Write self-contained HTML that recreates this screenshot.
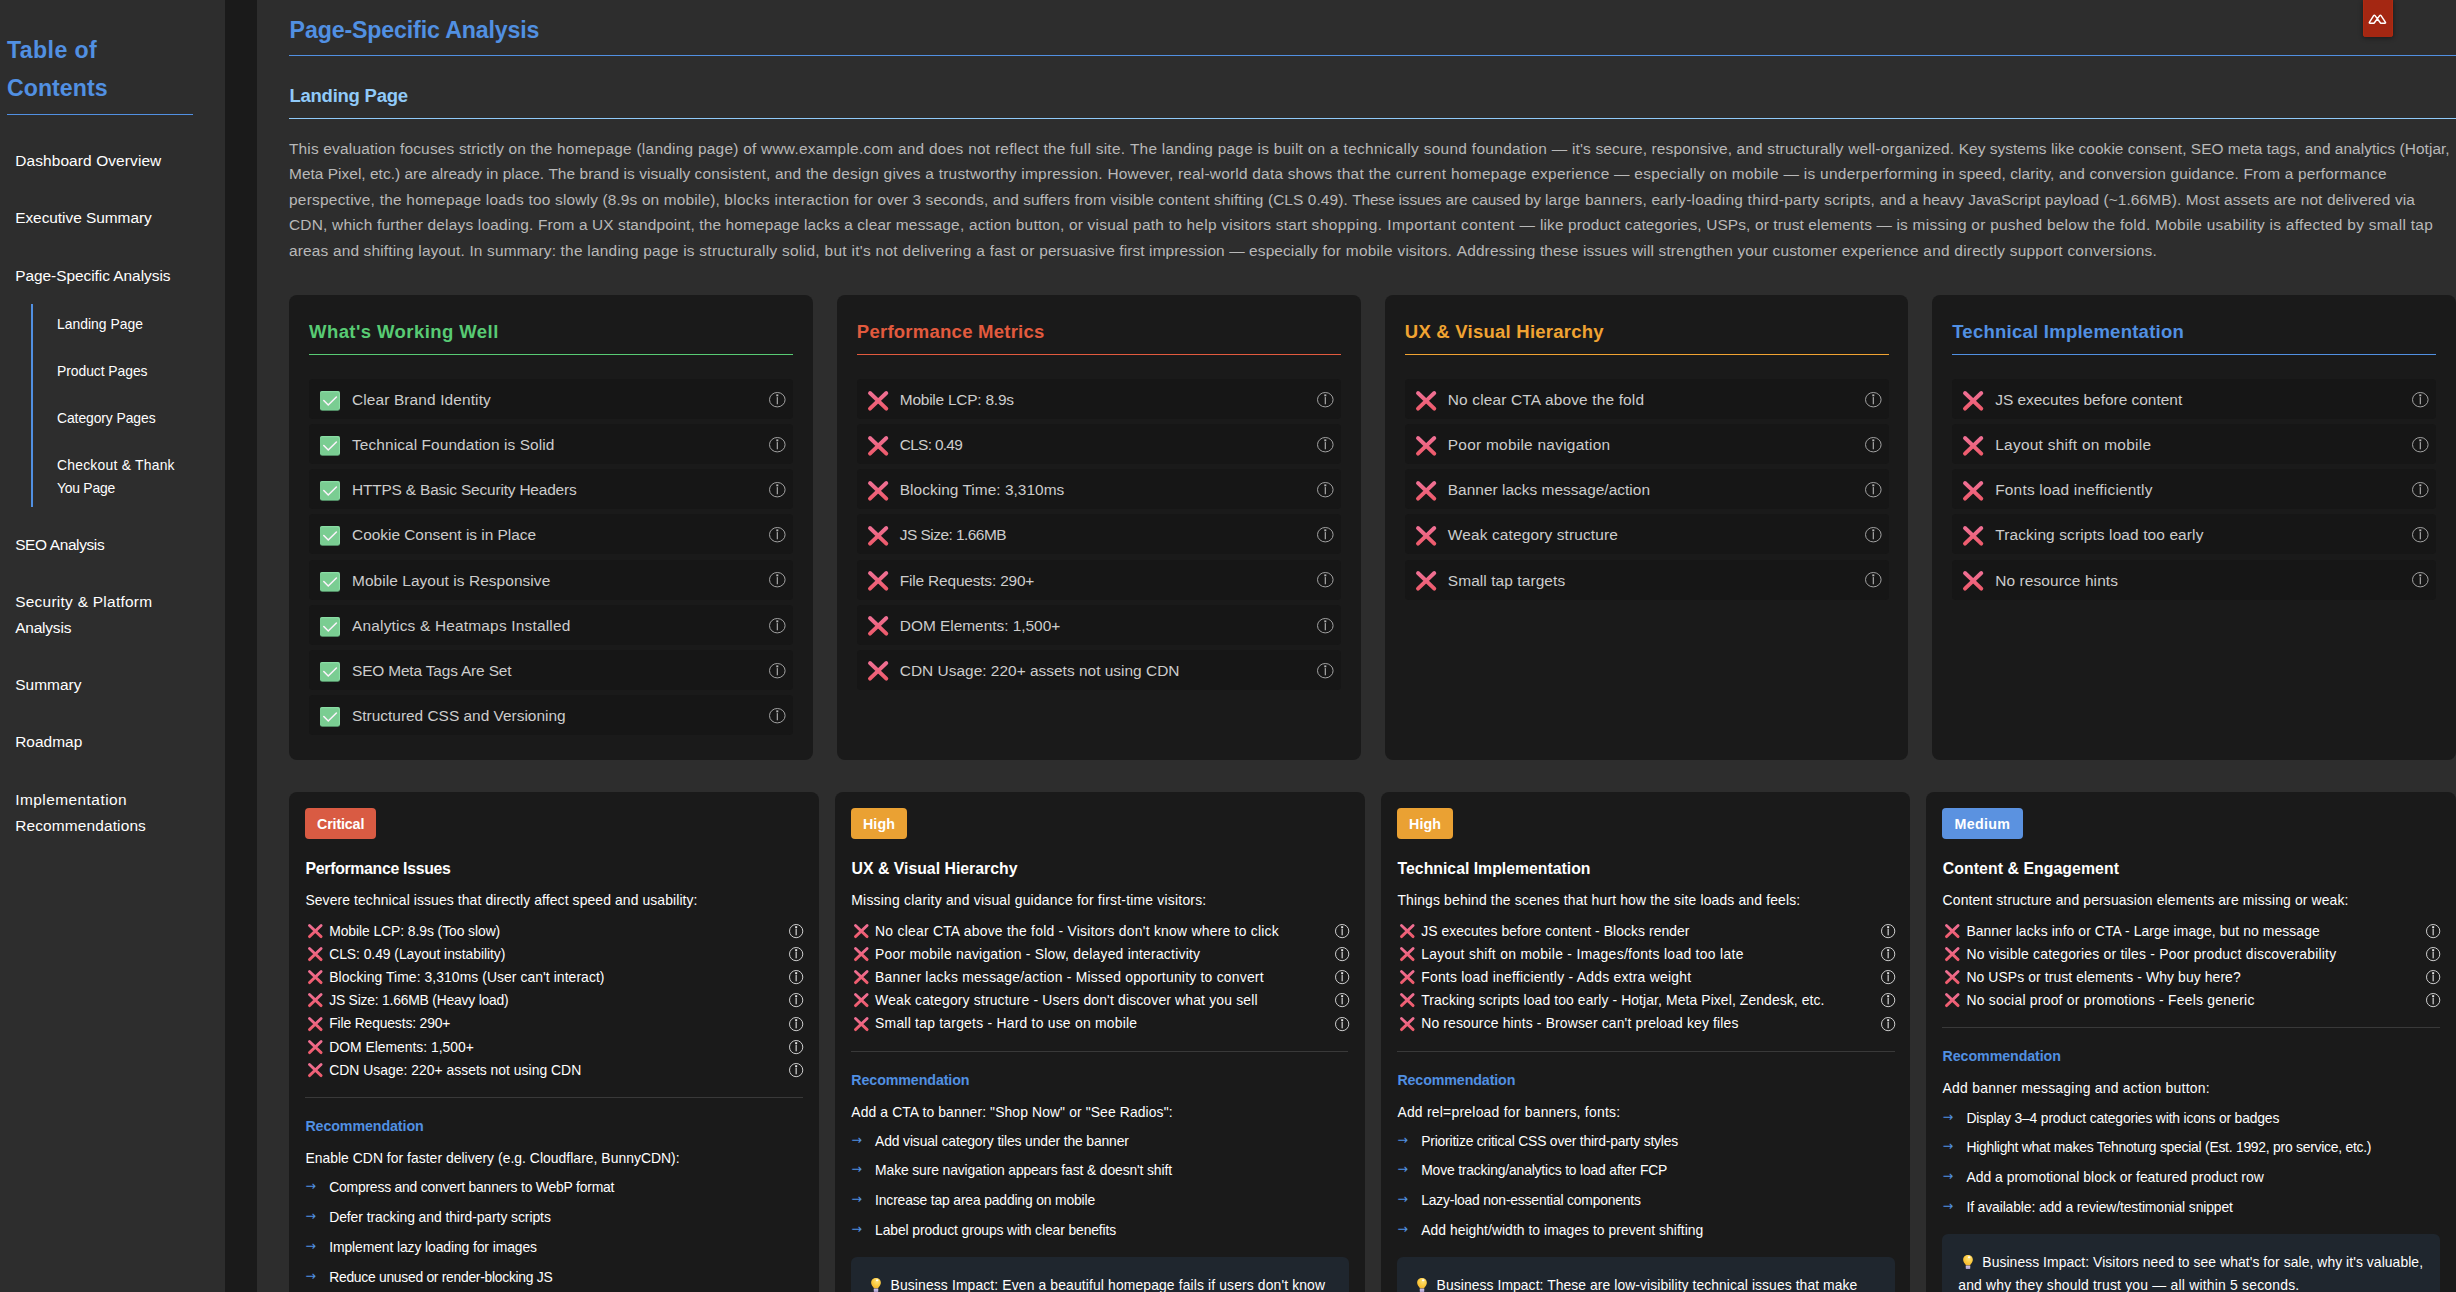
<!DOCTYPE html><html lang="en"><head><meta charset="utf-8"><title>Page-Specific Analysis</title><style>

html,body{margin:0;padding:0;}
html{width:2456px;height:1292px;overflow:hidden;background:#1a1a1a;}
body{width:2456px;height:1292px;overflow:hidden;background:#1a1a1a;font-family:"Liberation Sans", sans-serif;position:relative;}
.page{position:absolute;left:0;top:0;width:2456px;height:1292px;overflow:hidden;background:#1a1a1a;}
.b{position:absolute;display:block;}
svg.b{overflow:visible;}
.t{position:absolute;white-space:pre;display:block;margin:0;padding:0;font-weight:400;}
h1,h2,h3,h4,h5,p,ul,li,nav,main,section,header,a{margin:0;padding:0;list-style:none;font-size:inherit;font-weight:inherit;}

</style></head><body>
<svg width="0" height="0" style="position:absolute"><defs><linearGradient id="gx" x1="0" y1="0" x2="0" y2="1"><stop offset="0" stop-color="#f06f93"/><stop offset="1" stop-color="#ee5b6c"/></linearGradient><radialGradient id="gb" cx="0.6" cy="0.3" r="0.8"><stop offset="0" stop-color="#ffe27a"/><stop offset="0.55" stop-color="#fbc93d"/><stop offset="1" stop-color="#f0ad2a"/></radialGradient></defs></svg>
<div class="page">
<nav class="sidebar">
<div class="b" style="left:0.00px;top:0.00px;width:225.00px;height:1292.00px;background:#2d2d2d;border-radius:0px;"></div>
<h2 class="toc-title">
<span class="t" style="left:7.00px;top:30.78px;font-size:23.16px;line-height:38.4px;color:#5190e2;font-weight:700;letter-spacing:0.380px;">Table of</span>
<span class="t" style="left:7.00px;top:69.18px;font-size:23.16px;line-height:38.4px;color:#5190e2;font-weight:700;letter-spacing:0.032px;">Contents</span>
</h2>
<div class="b" style="left:7.00px;top:114.00px;width:186.00px;height:1.00px;background:#5190e2;border-radius:0px;"></div>
<ul class="toc">
<li>
<a class="t" style="left:15.20px;top:147.85px;font-size:15.44px;line-height:25.6px;color:#ffffff;letter-spacing:0.114px;">Dashboard Overview</a>
</li>
<li>
<a class="t" style="left:15.20px;top:205.15px;font-size:15.44px;line-height:25.6px;color:#ffffff;letter-spacing:-0.045px;">Executive Summary</a>
</li>
<li>
<a class="t" style="left:15.20px;top:262.55px;font-size:15.44px;line-height:25.6px;color:#ffffff;letter-spacing:-0.040px;">Page-Specific Analysis</a>
<ul class="toc-sub">
<div class="b" style="left:31.00px;top:304.00px;width:2.00px;height:203.00px;background:#5190e2;border-radius:0px;"></div>
<li>
<a class="t" style="left:57.00px;top:312.66px;font-size:13.9px;line-height:23.04px;color:#ffffff;letter-spacing:0.013px;">Landing Page</a>
</li>
<li>
<a class="t" style="left:57.00px;top:359.66px;font-size:13.9px;line-height:23.04px;color:#ffffff;letter-spacing:-0.048px;">Product Pages</a>
</li>
<li>
<a class="t" style="left:57.00px;top:406.66px;font-size:13.9px;line-height:23.04px;color:#ffffff;letter-spacing:-0.079px;">Category Pages</a>
</li>
<li>
<a class="t" style="left:57.00px;top:453.66px;font-size:13.9px;line-height:23.04px;color:#ffffff;letter-spacing:0.236px;">Checkout &amp; Thank</a>
<a class="t" style="left:57.00px;top:476.66px;font-size:13.9px;line-height:23.04px;color:#ffffff;letter-spacing:-0.231px;">You Page</a>
</li>
</ul>
</li>
<li>
<a class="t" style="left:15.20px;top:531.55px;font-size:15.44px;line-height:25.6px;color:#ffffff;letter-spacing:-0.369px;">SEO Analysis</a>
</li>
<li>
<a class="t" style="left:15.20px;top:588.95px;font-size:15.44px;line-height:25.6px;color:#ffffff;letter-spacing:0.267px;">Security &amp; Platform</a>
<a class="t" style="left:15.20px;top:614.55px;font-size:15.44px;line-height:25.6px;color:#ffffff;letter-spacing:-0.186px;">Analysis</a>
</li>
<li>
<a class="t" style="left:15.20px;top:672.15px;font-size:15.44px;line-height:25.6px;color:#ffffff;letter-spacing:0.036px;">Summary</a>
</li>
<li>
<a class="t" style="left:15.20px;top:729.45px;font-size:15.44px;line-height:25.6px;color:#ffffff;letter-spacing:0.023px;">Roadmap</a>
</li>
<li>
<a class="t" style="left:15.20px;top:787.05px;font-size:15.44px;line-height:25.6px;color:#ffffff;letter-spacing:0.454px;">Implementation</a>
<a class="t" style="left:15.20px;top:812.65px;font-size:15.44px;line-height:25.6px;color:#ffffff;letter-spacing:0.139px;">Recommendations</a>
</li>
</ul>
</nav>
<main class="content">
<div class="b" style="left:257.00px;top:0.00px;width:2199.00px;height:1292.00px;background:#2d2d2d;border-radius:0px;"></div>
<h2 class="t" style="left:289.60px;top:10.78px;font-size:23.16px;line-height:38.4px;color:#5190e2;font-weight:700;letter-spacing:-0.136px;">Page-Specific Analysis</h2>
<div class="b" style="left:289.00px;top:55.00px;width:2167.00px;height:1.00px;background:#5190e2;border-radius:0px;"></div>
<h3 class="t" style="left:289.40px;top:81.02px;font-size:18.53px;line-height:30.72px;color:#90caf9;font-weight:700;letter-spacing:-0.242px;">Landing Page</h3>
<div class="b" style="left:289.00px;top:118.00px;width:2167.00px;height:1.00px;background:#90caf9;border-radius:0px;"></div>
<p class="intro">
<span class="t" style="left:289.00px;top:135.85px;font-size:15.44px;line-height:25.6px;color:#b9b9b9;letter-spacing:0.179px;">This evaluation focuses strictly on the </span>
<span class="t" style="left:557.00px;top:135.85px;font-size:15.44px;line-height:25.6px;color:#b9b9b9;letter-spacing:0.248px;">homepage (landing page) </span>
<span class="t" style="left:743.20px;top:135.85px;font-size:15.44px;line-height:25.6px;color:#b9b9b9;letter-spacing:0.240px;">of www.example.com </span>
<span class="t" style="left:897.90px;top:135.85px;font-size:15.44px;line-height:25.6px;color:#b9b9b9;letter-spacing:0.270px;">and does not reflect the full site. </span>
<span class="t" style="left:1129.90px;top:135.85px;font-size:15.44px;line-height:25.6px;color:#b9b9b9;letter-spacing:0.236px;">The landing page is built </span>
<span class="t" style="left:1307.70px;top:135.85px;font-size:15.44px;line-height:25.6px;color:#b9b9b9;letter-spacing:0.309px;">on a technically sound foundation — </span>
<span class="t" style="left:1572.00px;top:135.85px;font-size:15.44px;line-height:25.6px;color:#b9b9b9;letter-spacing:0.152px;">it's secure, responsive, and structurally well-organized. </span>
<span class="t" style="left:1958.70px;top:135.85px;font-size:15.44px;line-height:25.6px;color:#b9b9b9;letter-spacing:0.040px;">Key systems like cookie consent, SEO meta tags, and analytics (Hotjar,</span>
<span class="t" style="left:289.00px;top:161.35px;font-size:15.44px;line-height:25.6px;color:#b9b9b9;letter-spacing:0.028px;">Meta Pixel, etc.) are already in place. </span>
<span class="t" style="left:548.40px;top:161.35px;font-size:15.44px;line-height:25.6px;color:#b9b9b9;letter-spacing:0.054px;">The brand is visually </span>
<span class="t" style="left:694.60px;top:161.35px;font-size:15.44px;line-height:25.6px;color:#b9b9b9;letter-spacing:0.197px;">consistent, and the design </span>
<span class="t" style="left:883.60px;top:161.35px;font-size:15.44px;line-height:25.6px;color:#b9b9b9;letter-spacing:0.237px;">gives a trustworthy impression. </span>
<span class="t" style="left:1107.40px;top:161.35px;font-size:15.44px;line-height:25.6px;color:#b9b9b9;letter-spacing:0.210px;">However, real-world data shows </span>
<span class="t" style="left:1337.00px;top:161.35px;font-size:15.44px;line-height:25.6px;color:#b9b9b9;letter-spacing:0.339px;">that the current homepage </span>
<span class="t" style="left:1531.20px;top:161.35px;font-size:15.44px;line-height:25.6px;color:#b9b9b9;letter-spacing:0.280px;">experience — especially on mobile — is underperforming </span>
<span class="t" style="left:1942.20px;top:161.35px;font-size:15.44px;line-height:25.6px;color:#b9b9b9;letter-spacing:0.107px;">in speed, clarity, and </span>
<span class="t" style="left:2089.40px;top:161.35px;font-size:15.44px;line-height:25.6px;color:#b9b9b9;letter-spacing:0.186px;">conversion guidance. From a performance</span>
<span class="t" style="left:289.00px;top:186.85px;font-size:15.44px;line-height:25.6px;color:#b9b9b9;letter-spacing:0.240px;">perspective, the homepage loads too </span>
<span class="t" style="left:555.10px;top:186.85px;font-size:15.44px;line-height:25.6px;color:#b9b9b9;letter-spacing:0.144px;">slowly (8.9s on mobile), </span>
<span class="t" style="left:724.30px;top:186.85px;font-size:15.44px;line-height:25.6px;color:#b9b9b9;letter-spacing:0.318px;">blocks interaction for </span>
<span class="t" style="left:877.50px;top:186.85px;font-size:15.44px;line-height:25.6px;color:#b9b9b9;letter-spacing:0.123px;">over 3 seconds, and suffers from </span>
<span class="t" style="left:1110.40px;top:186.85px;font-size:15.44px;line-height:25.6px;color:#b9b9b9;letter-spacing:0.088px;">visible content shifting (CLS 0.49). </span>
<span class="t" style="left:1352.20px;top:186.85px;font-size:15.44px;line-height:25.6px;color:#b9b9b9;letter-spacing:-0.141px;">These issues are caused by </span>
<span class="t" style="left:1544.90px;top:186.85px;font-size:15.44px;line-height:25.6px;color:#b9b9b9;letter-spacing:0.243px;">large banners, early-loading third-party scripts, </span>
<span class="t" style="left:1879.70px;top:186.85px;font-size:15.44px;line-height:25.6px;color:#b9b9b9;letter-spacing:0.018px;">and a heavy JavaScript payload </span>
<span class="t" style="left:2103.40px;top:186.85px;font-size:15.44px;line-height:25.6px;color:#b9b9b9;letter-spacing:0.110px;">(~1.66MB). Most assets are not delivered via</span>
<span class="t" style="left:289.00px;top:212.35px;font-size:15.44px;line-height:25.6px;color:#b9b9b9;letter-spacing:0.201px;">CDN, which further delays loading. </span>
<span class="t" style="left:538.00px;top:212.35px;font-size:15.44px;line-height:25.6px;color:#b9b9b9;letter-spacing:0.117px;">From a UX standpoint, </span>
<span class="t" style="left:699.30px;top:212.35px;font-size:15.44px;line-height:25.6px;color:#b9b9b9;letter-spacing:0.126px;">the homepage lacks a clear </span>
<span class="t" style="left:895.80px;top:212.35px;font-size:15.44px;line-height:25.6px;color:#b9b9b9;letter-spacing:0.207px;">message, action button, or </span>
<span class="t" style="left:1087.60px;top:212.35px;font-size:15.44px;line-height:25.6px;color:#b9b9b9;letter-spacing:0.246px;">visual path to help visitors start </span>
<span class="t" style="left:1311.60px;top:212.35px;font-size:15.44px;line-height:25.6px;color:#b9b9b9;letter-spacing:0.433px;">shopping. Important content — </span>
<span class="t" style="left:1540.00px;top:212.35px;font-size:15.44px;line-height:25.6px;color:#b9b9b9;letter-spacing:0.124px;">like product categories, USPs, or trust elements — </span>
<span class="t" style="left:1896.40px;top:212.35px;font-size:15.44px;line-height:25.6px;color:#b9b9b9;letter-spacing:0.262px;">is missing or pushed below the </span>
<span class="t" style="left:2119.90px;top:212.35px;font-size:15.44px;line-height:25.6px;color:#b9b9b9;letter-spacing:0.278px;">fold. Mobile usability is affected by small tap</span>
<span class="t" style="left:289.00px;top:237.85px;font-size:15.44px;line-height:25.6px;color:#b9b9b9;letter-spacing:0.166px;">areas and shifting layout. In summary: </span>
<span class="t" style="left:560.60px;top:237.85px;font-size:15.44px;line-height:25.6px;color:#b9b9b9;letter-spacing:0.240px;">the landing page is </span>
<span class="t" style="left:699.30px;top:237.85px;font-size:15.44px;line-height:25.6px;color:#b9b9b9;letter-spacing:0.298px;">structurally solid, but it's </span>
<span class="t" style="left:875.60px;top:237.85px;font-size:15.44px;line-height:25.6px;color:#b9b9b9;letter-spacing:0.297px;">not delivering a fast or </span>
<span class="t" style="left:1039.20px;top:237.85px;font-size:15.44px;line-height:25.6px;color:#b9b9b9;letter-spacing:0.106px;">persuasive first impression — especially </span>
<span class="t" style="left:1322.40px;top:237.85px;font-size:15.44px;line-height:25.6px;color:#b9b9b9;letter-spacing:0.267px;">for mobile visitors. </span>
<span class="t" style="left:1456.70px;top:237.85px;font-size:15.44px;line-height:25.6px;color:#b9b9b9;letter-spacing:0.155px;">Addressing these issues will strengthen your customer experience </span>
<span class="t" style="left:1923.30px;top:237.85px;font-size:15.44px;line-height:25.6px;color:#b9b9b9;letter-spacing:0.243px;">and directly support conversions.</span>
</p>
<div class="ext-tab">
<div class="b" style="left:2363px;top:0;width:30px;height:37px;background:#a42712;border-radius:0 0 3px 3px;box-shadow:0 1px 5px rgba(0,0,0,.45), inset 1px 0 0 #b02a10, inset -1px 0 0 #b02a10"></div>
<svg class="b" style="left:2366.00px;top:12.00px" width="24" height="15" viewBox="0 0 24 15"><path d="M4.15 11.25 Q2.75 11.25 3.51 10.07 L7.65 3.66 Q8.30 2.65 9.02 3.61 L14.33 10.69 Q14.75 11.25 15.45 11.25 L18.70 11.25 Q20.10 11.25 19.33 10.08 L15.06 3.65 Q14.40 2.65 13.68 3.61 L8.37 10.69 Q7.95 11.25 7.25 11.25 Z" fill="none" stroke="#fff" stroke-width="1.5" stroke-linejoin="round"/></svg>
</div>
<div class="summary-grid">
<section class="summary-card">
<div class="b" style="left:289.00px;top:295.00px;width:524.20px;height:465.00px;background:#1a1a1a;border-radius:8px;"></div>
<h4 class="t" style="left:309.00px;top:317.12px;font-size:18.53px;line-height:30.72px;color:#58cb74;font-weight:700;letter-spacing:0.422px;">What's Working Well</h4>
<div class="b" style="left:309.00px;top:354.00px;width:484.00px;height:1.00px;background:#58cb74;border-radius:0px;"></div>
<ul>
<li>
<div class="b" style="left:309.00px;top:379.00px;width:484.00px;height:40.00px;background:#161616;border-radius:4px;"></div>
<svg class="b" style="left:320.15px;top:390.95px" width="20" height="19.8" viewBox="0 0 20 19.8"><rect x="0" y="0" width="20" height="19.8" rx="2.4" fill="#64b17e"/><rect x="0" y="0" width="20" height="18.7" rx="2.4" fill="#8adda4"/><rect x="0" y="1.3" width="18.9" height="17.4" rx="2" fill="#7acd92"/><path d="M3.8 9.5 L8.25 14.0 L16.4 5.95" fill="none" stroke="#fbf2fb" stroke-width="1.55" stroke-linecap="round" stroke-linejoin="miter"/></svg>
<span class="t" style="left:352.00px;top:386.95px;font-size:15.44px;line-height:25.6px;color:#cdcdcd;letter-spacing:0.123px;">Clear Brand Identity</span>
<svg class="b" style="left:767.70px;top:390.80px" width="18.6" height="17.4" viewBox="0 0 18.6 17.4"><ellipse cx="9.30" cy="8.70" rx="7.80" ry="7.20" fill="none" stroke="#a2a2a2" stroke-width="1"/><rect x="8.75" y="6.10" width="1.1" height="7.20" fill="#b4b4b4"/><rect x="8.30" y="3.40" width="2" height="1.9" fill="#b4b4b4"/></svg>
</li>
<li>
<div class="b" style="left:309.00px;top:424.14px;width:484.00px;height:40.00px;background:#161616;border-radius:4px;"></div>
<svg class="b" style="left:320.15px;top:436.09px" width="20" height="19.8" viewBox="0 0 20 19.8"><rect x="0" y="0" width="20" height="19.8" rx="2.4" fill="#64b17e"/><rect x="0" y="0" width="20" height="18.7" rx="2.4" fill="#8adda4"/><rect x="0" y="1.3" width="18.9" height="17.4" rx="2" fill="#7acd92"/><path d="M3.8 9.5 L8.25 14.0 L16.4 5.95" fill="none" stroke="#fbf2fb" stroke-width="1.55" stroke-linecap="round" stroke-linejoin="miter"/></svg>
<span class="t" style="left:352.00px;top:432.09px;font-size:15.44px;line-height:25.6px;color:#cdcdcd;letter-spacing:0.088px;">Technical Foundation is Solid</span>
<svg class="b" style="left:767.70px;top:435.94px" width="18.6" height="17.4" viewBox="0 0 18.6 17.4"><ellipse cx="9.30" cy="8.70" rx="7.80" ry="7.20" fill="none" stroke="#a2a2a2" stroke-width="1"/><rect x="8.75" y="6.10" width="1.1" height="7.20" fill="#b4b4b4"/><rect x="8.30" y="3.40" width="2" height="1.9" fill="#b4b4b4"/></svg>
</li>
<li>
<div class="b" style="left:309.00px;top:469.28px;width:484.00px;height:40.00px;background:#161616;border-radius:4px;"></div>
<svg class="b" style="left:320.15px;top:481.23px" width="20" height="19.8" viewBox="0 0 20 19.8"><rect x="0" y="0" width="20" height="19.8" rx="2.4" fill="#64b17e"/><rect x="0" y="0" width="20" height="18.7" rx="2.4" fill="#8adda4"/><rect x="0" y="1.3" width="18.9" height="17.4" rx="2" fill="#7acd92"/><path d="M3.8 9.5 L8.25 14.0 L16.4 5.95" fill="none" stroke="#fbf2fb" stroke-width="1.55" stroke-linecap="round" stroke-linejoin="miter"/></svg>
<span class="t" style="left:352.00px;top:477.23px;font-size:15.44px;line-height:25.6px;color:#cdcdcd;letter-spacing:-0.181px;">HTTPS &amp; Basic Security Headers</span>
<svg class="b" style="left:767.70px;top:481.08px" width="18.6" height="17.4" viewBox="0 0 18.6 17.4"><ellipse cx="9.30" cy="8.70" rx="7.80" ry="7.20" fill="none" stroke="#a2a2a2" stroke-width="1"/><rect x="8.75" y="6.10" width="1.1" height="7.20" fill="#b4b4b4"/><rect x="8.30" y="3.40" width="2" height="1.9" fill="#b4b4b4"/></svg>
</li>
<li>
<div class="b" style="left:309.00px;top:514.42px;width:484.00px;height:40.00px;background:#161616;border-radius:4px;"></div>
<svg class="b" style="left:320.15px;top:526.37px" width="20" height="19.8" viewBox="0 0 20 19.8"><rect x="0" y="0" width="20" height="19.8" rx="2.4" fill="#64b17e"/><rect x="0" y="0" width="20" height="18.7" rx="2.4" fill="#8adda4"/><rect x="0" y="1.3" width="18.9" height="17.4" rx="2" fill="#7acd92"/><path d="M3.8 9.5 L8.25 14.0 L16.4 5.95" fill="none" stroke="#fbf2fb" stroke-width="1.55" stroke-linecap="round" stroke-linejoin="miter"/></svg>
<span class="t" style="left:352.00px;top:522.37px;font-size:15.44px;line-height:25.6px;color:#cdcdcd;letter-spacing:-0.015px;">Cookie Consent is in Place</span>
<svg class="b" style="left:767.70px;top:526.22px" width="18.6" height="17.4" viewBox="0 0 18.6 17.4"><ellipse cx="9.30" cy="8.70" rx="7.80" ry="7.20" fill="none" stroke="#a2a2a2" stroke-width="1"/><rect x="8.75" y="6.10" width="1.1" height="7.20" fill="#b4b4b4"/><rect x="8.30" y="3.40" width="2" height="1.9" fill="#b4b4b4"/></svg>
</li>
<li>
<div class="b" style="left:309.00px;top:559.56px;width:484.00px;height:40.00px;background:#161616;border-radius:4px;"></div>
<svg class="b" style="left:320.15px;top:571.51px" width="20" height="19.8" viewBox="0 0 20 19.8"><rect x="0" y="0" width="20" height="19.8" rx="2.4" fill="#64b17e"/><rect x="0" y="0" width="20" height="18.7" rx="2.4" fill="#8adda4"/><rect x="0" y="1.3" width="18.9" height="17.4" rx="2" fill="#7acd92"/><path d="M3.8 9.5 L8.25 14.0 L16.4 5.95" fill="none" stroke="#fbf2fb" stroke-width="1.55" stroke-linecap="round" stroke-linejoin="miter"/></svg>
<span class="t" style="left:352.00px;top:567.51px;font-size:15.44px;line-height:25.6px;color:#cdcdcd;letter-spacing:0.066px;">Mobile Layout is Responsive</span>
<svg class="b" style="left:767.70px;top:571.36px" width="18.6" height="17.4" viewBox="0 0 18.6 17.4"><ellipse cx="9.30" cy="8.70" rx="7.80" ry="7.20" fill="none" stroke="#a2a2a2" stroke-width="1"/><rect x="8.75" y="6.10" width="1.1" height="7.20" fill="#b4b4b4"/><rect x="8.30" y="3.40" width="2" height="1.9" fill="#b4b4b4"/></svg>
</li>
<li>
<div class="b" style="left:309.00px;top:604.70px;width:484.00px;height:40.00px;background:#161616;border-radius:4px;"></div>
<svg class="b" style="left:320.15px;top:616.65px" width="20" height="19.8" viewBox="0 0 20 19.8"><rect x="0" y="0" width="20" height="19.8" rx="2.4" fill="#64b17e"/><rect x="0" y="0" width="20" height="18.7" rx="2.4" fill="#8adda4"/><rect x="0" y="1.3" width="18.9" height="17.4" rx="2" fill="#7acd92"/><path d="M3.8 9.5 L8.25 14.0 L16.4 5.95" fill="none" stroke="#fbf2fb" stroke-width="1.55" stroke-linecap="round" stroke-linejoin="miter"/></svg>
<span class="t" style="left:352.00px;top:612.65px;font-size:15.44px;line-height:25.6px;color:#cdcdcd;letter-spacing:0.190px;">Analytics &amp; Heatmaps Installed</span>
<svg class="b" style="left:767.70px;top:616.50px" width="18.6" height="17.4" viewBox="0 0 18.6 17.4"><ellipse cx="9.30" cy="8.70" rx="7.80" ry="7.20" fill="none" stroke="#a2a2a2" stroke-width="1"/><rect x="8.75" y="6.10" width="1.1" height="7.20" fill="#b4b4b4"/><rect x="8.30" y="3.40" width="2" height="1.9" fill="#b4b4b4"/></svg>
</li>
<li>
<div class="b" style="left:309.00px;top:649.84px;width:484.00px;height:40.00px;background:#161616;border-radius:4px;"></div>
<svg class="b" style="left:320.15px;top:661.79px" width="20" height="19.8" viewBox="0 0 20 19.8"><rect x="0" y="0" width="20" height="19.8" rx="2.4" fill="#64b17e"/><rect x="0" y="0" width="20" height="18.7" rx="2.4" fill="#8adda4"/><rect x="0" y="1.3" width="18.9" height="17.4" rx="2" fill="#7acd92"/><path d="M3.8 9.5 L8.25 14.0 L16.4 5.95" fill="none" stroke="#fbf2fb" stroke-width="1.55" stroke-linecap="round" stroke-linejoin="miter"/></svg>
<span class="t" style="left:352.00px;top:657.79px;font-size:15.44px;line-height:25.6px;color:#cdcdcd;letter-spacing:-0.164px;">SEO Meta Tags Are Set</span>
<svg class="b" style="left:767.70px;top:661.64px" width="18.6" height="17.4" viewBox="0 0 18.6 17.4"><ellipse cx="9.30" cy="8.70" rx="7.80" ry="7.20" fill="none" stroke="#a2a2a2" stroke-width="1"/><rect x="8.75" y="6.10" width="1.1" height="7.20" fill="#b4b4b4"/><rect x="8.30" y="3.40" width="2" height="1.9" fill="#b4b4b4"/></svg>
</li>
<li>
<div class="b" style="left:309.00px;top:694.98px;width:484.00px;height:40.00px;background:#161616;border-radius:4px;"></div>
<svg class="b" style="left:320.15px;top:706.93px" width="20" height="19.8" viewBox="0 0 20 19.8"><rect x="0" y="0" width="20" height="19.8" rx="2.4" fill="#64b17e"/><rect x="0" y="0" width="20" height="18.7" rx="2.4" fill="#8adda4"/><rect x="0" y="1.3" width="18.9" height="17.4" rx="2" fill="#7acd92"/><path d="M3.8 9.5 L8.25 14.0 L16.4 5.95" fill="none" stroke="#fbf2fb" stroke-width="1.55" stroke-linecap="round" stroke-linejoin="miter"/></svg>
<span class="t" style="left:352.00px;top:702.93px;font-size:15.44px;line-height:25.6px;color:#cdcdcd;letter-spacing:-0.003px;">Structured CSS and Versioning</span>
<svg class="b" style="left:767.70px;top:706.78px" width="18.6" height="17.4" viewBox="0 0 18.6 17.4"><ellipse cx="9.30" cy="8.70" rx="7.80" ry="7.20" fill="none" stroke="#a2a2a2" stroke-width="1"/><rect x="8.75" y="6.10" width="1.1" height="7.20" fill="#b4b4b4"/><rect x="8.30" y="3.40" width="2" height="1.9" fill="#b4b4b4"/></svg>
</li>
</ul>
</section>
<section class="summary-card">
<div class="b" style="left:836.80px;top:295.00px;width:524.40px;height:465.00px;background:#1a1a1a;border-radius:8px;"></div>
<h4 class="t" style="left:856.80px;top:317.12px;font-size:18.53px;line-height:30.72px;color:#e25a3e;font-weight:700;letter-spacing:0.243px;">Performance Metrics</h4>
<div class="b" style="left:856.80px;top:354.00px;width:484.00px;height:1.00px;background:#e25a3e;border-radius:0px;"></div>
<ul>
<li>
<div class="b" style="left:856.80px;top:379.00px;width:484.00px;height:40.00px;background:#161616;border-radius:4px;"></div>
<svg class="b" style="left:867.85px;top:390.55px" width="20.3" height="19.7" viewBox="0 0 20.3 19.7"><path d="M2.00 2.00 L18.30 17.70 M18.30 2.00 L2.00 17.70" fill="none" stroke="url(#gx)" stroke-width="3.90" stroke-linecap="round"/></svg>
<span class="t" style="left:899.80px;top:386.95px;font-size:15.44px;line-height:25.6px;color:#cdcdcd;letter-spacing:-0.223px;">Mobile LCP: 8.9s</span>
<svg class="b" style="left:1315.50px;top:390.80px" width="18.6" height="17.4" viewBox="0 0 18.6 17.4"><ellipse cx="9.30" cy="8.70" rx="7.80" ry="7.20" fill="none" stroke="#a2a2a2" stroke-width="1"/><rect x="8.75" y="6.10" width="1.1" height="7.20" fill="#b4b4b4"/><rect x="8.30" y="3.40" width="2" height="1.9" fill="#b4b4b4"/></svg>
</li>
<li>
<div class="b" style="left:856.80px;top:424.14px;width:484.00px;height:40.00px;background:#161616;border-radius:4px;"></div>
<svg class="b" style="left:867.85px;top:435.69px" width="20.3" height="19.7" viewBox="0 0 20.3 19.7"><path d="M2.00 2.00 L18.30 17.70 M18.30 2.00 L2.00 17.70" fill="none" stroke="url(#gx)" stroke-width="3.90" stroke-linecap="round"/></svg>
<span class="t" style="left:899.80px;top:432.09px;font-size:15.44px;line-height:25.6px;color:#cdcdcd;letter-spacing:-0.706px;">CLS: 0.49</span>
<svg class="b" style="left:1315.50px;top:435.94px" width="18.6" height="17.4" viewBox="0 0 18.6 17.4"><ellipse cx="9.30" cy="8.70" rx="7.80" ry="7.20" fill="none" stroke="#a2a2a2" stroke-width="1"/><rect x="8.75" y="6.10" width="1.1" height="7.20" fill="#b4b4b4"/><rect x="8.30" y="3.40" width="2" height="1.9" fill="#b4b4b4"/></svg>
</li>
<li>
<div class="b" style="left:856.80px;top:469.28px;width:484.00px;height:40.00px;background:#161616;border-radius:4px;"></div>
<svg class="b" style="left:867.85px;top:480.83px" width="20.3" height="19.7" viewBox="0 0 20.3 19.7"><path d="M2.00 2.00 L18.30 17.70 M18.30 2.00 L2.00 17.70" fill="none" stroke="url(#gx)" stroke-width="3.90" stroke-linecap="round"/></svg>
<span class="t" style="left:899.80px;top:477.23px;font-size:15.44px;line-height:25.6px;color:#cdcdcd;letter-spacing:0.028px;">Blocking Time: 3,310ms</span>
<svg class="b" style="left:1315.50px;top:481.08px" width="18.6" height="17.4" viewBox="0 0 18.6 17.4"><ellipse cx="9.30" cy="8.70" rx="7.80" ry="7.20" fill="none" stroke="#a2a2a2" stroke-width="1"/><rect x="8.75" y="6.10" width="1.1" height="7.20" fill="#b4b4b4"/><rect x="8.30" y="3.40" width="2" height="1.9" fill="#b4b4b4"/></svg>
</li>
<li>
<div class="b" style="left:856.80px;top:514.42px;width:484.00px;height:40.00px;background:#161616;border-radius:4px;"></div>
<svg class="b" style="left:867.85px;top:525.97px" width="20.3" height="19.7" viewBox="0 0 20.3 19.7"><path d="M2.00 2.00 L18.30 17.70 M18.30 2.00 L2.00 17.70" fill="none" stroke="url(#gx)" stroke-width="3.90" stroke-linecap="round"/></svg>
<span class="t" style="left:899.80px;top:522.37px;font-size:15.44px;line-height:25.6px;color:#cdcdcd;letter-spacing:-0.528px;">JS Size: 1.66MB</span>
<svg class="b" style="left:1315.50px;top:526.22px" width="18.6" height="17.4" viewBox="0 0 18.6 17.4"><ellipse cx="9.30" cy="8.70" rx="7.80" ry="7.20" fill="none" stroke="#a2a2a2" stroke-width="1"/><rect x="8.75" y="6.10" width="1.1" height="7.20" fill="#b4b4b4"/><rect x="8.30" y="3.40" width="2" height="1.9" fill="#b4b4b4"/></svg>
</li>
<li>
<div class="b" style="left:856.80px;top:559.56px;width:484.00px;height:40.00px;background:#161616;border-radius:4px;"></div>
<svg class="b" style="left:867.85px;top:571.11px" width="20.3" height="19.7" viewBox="0 0 20.3 19.7"><path d="M2.00 2.00 L18.30 17.70 M18.30 2.00 L2.00 17.70" fill="none" stroke="url(#gx)" stroke-width="3.90" stroke-linecap="round"/></svg>
<span class="t" style="left:899.80px;top:567.51px;font-size:15.44px;line-height:25.6px;color:#cdcdcd;letter-spacing:-0.175px;">File Requests: 290+</span>
<svg class="b" style="left:1315.50px;top:571.36px" width="18.6" height="17.4" viewBox="0 0 18.6 17.4"><ellipse cx="9.30" cy="8.70" rx="7.80" ry="7.20" fill="none" stroke="#a2a2a2" stroke-width="1"/><rect x="8.75" y="6.10" width="1.1" height="7.20" fill="#b4b4b4"/><rect x="8.30" y="3.40" width="2" height="1.9" fill="#b4b4b4"/></svg>
</li>
<li>
<div class="b" style="left:856.80px;top:604.70px;width:484.00px;height:40.00px;background:#161616;border-radius:4px;"></div>
<svg class="b" style="left:867.85px;top:616.25px" width="20.3" height="19.7" viewBox="0 0 20.3 19.7"><path d="M2.00 2.00 L18.30 17.70 M18.30 2.00 L2.00 17.70" fill="none" stroke="url(#gx)" stroke-width="3.90" stroke-linecap="round"/></svg>
<span class="t" style="left:899.80px;top:612.65px;font-size:15.44px;line-height:25.6px;color:#cdcdcd;letter-spacing:-0.025px;">DOM Elements: 1,500+</span>
<svg class="b" style="left:1315.50px;top:616.50px" width="18.6" height="17.4" viewBox="0 0 18.6 17.4"><ellipse cx="9.30" cy="8.70" rx="7.80" ry="7.20" fill="none" stroke="#a2a2a2" stroke-width="1"/><rect x="8.75" y="6.10" width="1.1" height="7.20" fill="#b4b4b4"/><rect x="8.30" y="3.40" width="2" height="1.9" fill="#b4b4b4"/></svg>
</li>
<li>
<div class="b" style="left:856.80px;top:649.84px;width:484.00px;height:40.00px;background:#161616;border-radius:4px;"></div>
<svg class="b" style="left:867.85px;top:661.39px" width="20.3" height="19.7" viewBox="0 0 20.3 19.7"><path d="M2.00 2.00 L18.30 17.70 M18.30 2.00 L2.00 17.70" fill="none" stroke="url(#gx)" stroke-width="3.90" stroke-linecap="round"/></svg>
<span class="t" style="left:899.80px;top:657.79px;font-size:15.44px;line-height:25.6px;color:#cdcdcd;letter-spacing:0.011px;">CDN Usage: 220+ assets not using CDN</span>
<svg class="b" style="left:1315.50px;top:661.64px" width="18.6" height="17.4" viewBox="0 0 18.6 17.4"><ellipse cx="9.30" cy="8.70" rx="7.80" ry="7.20" fill="none" stroke="#a2a2a2" stroke-width="1"/><rect x="8.75" y="6.10" width="1.1" height="7.20" fill="#b4b4b4"/><rect x="8.30" y="3.40" width="2" height="1.9" fill="#b4b4b4"/></svg>
</li>
</ul>
</section>
<section class="summary-card">
<div class="b" style="left:1384.80px;top:295.00px;width:523.70px;height:465.00px;background:#1a1a1a;border-radius:8px;"></div>
<h4 class="t" style="left:1404.80px;top:317.12px;font-size:18.53px;line-height:30.72px;color:#f0a332;font-weight:700;letter-spacing:0.235px;">UX &amp; Visual Hierarchy</h4>
<div class="b" style="left:1404.80px;top:354.00px;width:484.00px;height:1.00px;background:#f0a332;border-radius:0px;"></div>
<ul>
<li>
<div class="b" style="left:1404.80px;top:379.00px;width:484.00px;height:40.00px;background:#161616;border-radius:4px;"></div>
<svg class="b" style="left:1415.85px;top:390.55px" width="20.3" height="19.7" viewBox="0 0 20.3 19.7"><path d="M2.00 2.00 L18.30 17.70 M18.30 2.00 L2.00 17.70" fill="none" stroke="url(#gx)" stroke-width="3.90" stroke-linecap="round"/></svg>
<span class="t" style="left:1447.80px;top:386.95px;font-size:15.44px;line-height:25.6px;color:#cdcdcd;letter-spacing:0.165px;">No clear CTA above the fold</span>
<svg class="b" style="left:1863.50px;top:390.80px" width="18.6" height="17.4" viewBox="0 0 18.6 17.4"><ellipse cx="9.30" cy="8.70" rx="7.80" ry="7.20" fill="none" stroke="#a2a2a2" stroke-width="1"/><rect x="8.75" y="6.10" width="1.1" height="7.20" fill="#b4b4b4"/><rect x="8.30" y="3.40" width="2" height="1.9" fill="#b4b4b4"/></svg>
</li>
<li>
<div class="b" style="left:1404.80px;top:424.14px;width:484.00px;height:40.00px;background:#161616;border-radius:4px;"></div>
<svg class="b" style="left:1415.85px;top:435.69px" width="20.3" height="19.7" viewBox="0 0 20.3 19.7"><path d="M2.00 2.00 L18.30 17.70 M18.30 2.00 L2.00 17.70" fill="none" stroke="url(#gx)" stroke-width="3.90" stroke-linecap="round"/></svg>
<span class="t" style="left:1447.80px;top:432.09px;font-size:15.44px;line-height:25.6px;color:#cdcdcd;letter-spacing:0.252px;">Poor mobile navigation</span>
<svg class="b" style="left:1863.50px;top:435.94px" width="18.6" height="17.4" viewBox="0 0 18.6 17.4"><ellipse cx="9.30" cy="8.70" rx="7.80" ry="7.20" fill="none" stroke="#a2a2a2" stroke-width="1"/><rect x="8.75" y="6.10" width="1.1" height="7.20" fill="#b4b4b4"/><rect x="8.30" y="3.40" width="2" height="1.9" fill="#b4b4b4"/></svg>
</li>
<li>
<div class="b" style="left:1404.80px;top:469.28px;width:484.00px;height:40.00px;background:#161616;border-radius:4px;"></div>
<svg class="b" style="left:1415.85px;top:480.83px" width="20.3" height="19.7" viewBox="0 0 20.3 19.7"><path d="M2.00 2.00 L18.30 17.70 M18.30 2.00 L2.00 17.70" fill="none" stroke="url(#gx)" stroke-width="3.90" stroke-linecap="round"/></svg>
<span class="t" style="left:1447.80px;top:477.23px;font-size:15.44px;line-height:25.6px;color:#cdcdcd;letter-spacing:0.020px;">Banner lacks message/action</span>
<svg class="b" style="left:1863.50px;top:481.08px" width="18.6" height="17.4" viewBox="0 0 18.6 17.4"><ellipse cx="9.30" cy="8.70" rx="7.80" ry="7.20" fill="none" stroke="#a2a2a2" stroke-width="1"/><rect x="8.75" y="6.10" width="1.1" height="7.20" fill="#b4b4b4"/><rect x="8.30" y="3.40" width="2" height="1.9" fill="#b4b4b4"/></svg>
</li>
<li>
<div class="b" style="left:1404.80px;top:514.42px;width:484.00px;height:40.00px;background:#161616;border-radius:4px;"></div>
<svg class="b" style="left:1415.85px;top:525.97px" width="20.3" height="19.7" viewBox="0 0 20.3 19.7"><path d="M2.00 2.00 L18.30 17.70 M18.30 2.00 L2.00 17.70" fill="none" stroke="url(#gx)" stroke-width="3.90" stroke-linecap="round"/></svg>
<span class="t" style="left:1447.80px;top:522.37px;font-size:15.44px;line-height:25.6px;color:#cdcdcd;letter-spacing:0.138px;">Weak category structure</span>
<svg class="b" style="left:1863.50px;top:526.22px" width="18.6" height="17.4" viewBox="0 0 18.6 17.4"><ellipse cx="9.30" cy="8.70" rx="7.80" ry="7.20" fill="none" stroke="#a2a2a2" stroke-width="1"/><rect x="8.75" y="6.10" width="1.1" height="7.20" fill="#b4b4b4"/><rect x="8.30" y="3.40" width="2" height="1.9" fill="#b4b4b4"/></svg>
</li>
<li>
<div class="b" style="left:1404.80px;top:559.56px;width:484.00px;height:40.00px;background:#161616;border-radius:4px;"></div>
<svg class="b" style="left:1415.85px;top:571.11px" width="20.3" height="19.7" viewBox="0 0 20.3 19.7"><path d="M2.00 2.00 L18.30 17.70 M18.30 2.00 L2.00 17.70" fill="none" stroke="url(#gx)" stroke-width="3.90" stroke-linecap="round"/></svg>
<span class="t" style="left:1447.80px;top:567.51px;font-size:15.44px;line-height:25.6px;color:#cdcdcd;letter-spacing:0.092px;">Small tap targets</span>
<svg class="b" style="left:1863.50px;top:571.36px" width="18.6" height="17.4" viewBox="0 0 18.6 17.4"><ellipse cx="9.30" cy="8.70" rx="7.80" ry="7.20" fill="none" stroke="#a2a2a2" stroke-width="1"/><rect x="8.75" y="6.10" width="1.1" height="7.20" fill="#b4b4b4"/><rect x="8.30" y="3.40" width="2" height="1.9" fill="#b4b4b4"/></svg>
</li>
</ul>
</section>
<section class="summary-card">
<div class="b" style="left:1932.20px;top:295.00px;width:524.20px;height:465.00px;background:#1a1a1a;border-radius:8px;"></div>
<h4 class="t" style="left:1952.20px;top:317.12px;font-size:18.53px;line-height:30.72px;color:#5190e2;font-weight:700;letter-spacing:0.245px;">Technical Implementation</h4>
<div class="b" style="left:1952.20px;top:354.00px;width:484.00px;height:1.00px;background:#5190e2;border-radius:0px;"></div>
<ul>
<li>
<div class="b" style="left:1952.20px;top:379.00px;width:484.00px;height:40.00px;background:#161616;border-radius:4px;"></div>
<svg class="b" style="left:1963.25px;top:390.55px" width="20.3" height="19.7" viewBox="0 0 20.3 19.7"><path d="M2.00 2.00 L18.30 17.70 M18.30 2.00 L2.00 17.70" fill="none" stroke="url(#gx)" stroke-width="3.90" stroke-linecap="round"/></svg>
<span class="t" style="left:1995.20px;top:386.95px;font-size:15.44px;line-height:25.6px;color:#cdcdcd;letter-spacing:-0.004px;">JS executes before content</span>
<svg class="b" style="left:2410.90px;top:390.80px" width="18.6" height="17.4" viewBox="0 0 18.6 17.4"><ellipse cx="9.30" cy="8.70" rx="7.80" ry="7.20" fill="none" stroke="#a2a2a2" stroke-width="1"/><rect x="8.75" y="6.10" width="1.1" height="7.20" fill="#b4b4b4"/><rect x="8.30" y="3.40" width="2" height="1.9" fill="#b4b4b4"/></svg>
</li>
<li>
<div class="b" style="left:1952.20px;top:424.14px;width:484.00px;height:40.00px;background:#161616;border-radius:4px;"></div>
<svg class="b" style="left:1963.25px;top:435.69px" width="20.3" height="19.7" viewBox="0 0 20.3 19.7"><path d="M2.00 2.00 L18.30 17.70 M18.30 2.00 L2.00 17.70" fill="none" stroke="url(#gx)" stroke-width="3.90" stroke-linecap="round"/></svg>
<span class="t" style="left:1995.20px;top:432.09px;font-size:15.44px;line-height:25.6px;color:#cdcdcd;letter-spacing:0.269px;">Layout shift on mobile</span>
<svg class="b" style="left:2410.90px;top:435.94px" width="18.6" height="17.4" viewBox="0 0 18.6 17.4"><ellipse cx="9.30" cy="8.70" rx="7.80" ry="7.20" fill="none" stroke="#a2a2a2" stroke-width="1"/><rect x="8.75" y="6.10" width="1.1" height="7.20" fill="#b4b4b4"/><rect x="8.30" y="3.40" width="2" height="1.9" fill="#b4b4b4"/></svg>
</li>
<li>
<div class="b" style="left:1952.20px;top:469.28px;width:484.00px;height:40.00px;background:#161616;border-radius:4px;"></div>
<svg class="b" style="left:1963.25px;top:480.83px" width="20.3" height="19.7" viewBox="0 0 20.3 19.7"><path d="M2.00 2.00 L18.30 17.70 M18.30 2.00 L2.00 17.70" fill="none" stroke="url(#gx)" stroke-width="3.90" stroke-linecap="round"/></svg>
<span class="t" style="left:1995.20px;top:477.23px;font-size:15.44px;line-height:25.6px;color:#cdcdcd;letter-spacing:0.210px;">Fonts load inefficiently</span>
<svg class="b" style="left:2410.90px;top:481.08px" width="18.6" height="17.4" viewBox="0 0 18.6 17.4"><ellipse cx="9.30" cy="8.70" rx="7.80" ry="7.20" fill="none" stroke="#a2a2a2" stroke-width="1"/><rect x="8.75" y="6.10" width="1.1" height="7.20" fill="#b4b4b4"/><rect x="8.30" y="3.40" width="2" height="1.9" fill="#b4b4b4"/></svg>
</li>
<li>
<div class="b" style="left:1952.20px;top:514.42px;width:484.00px;height:40.00px;background:#161616;border-radius:4px;"></div>
<svg class="b" style="left:1963.25px;top:525.97px" width="20.3" height="19.7" viewBox="0 0 20.3 19.7"><path d="M2.00 2.00 L18.30 17.70 M18.30 2.00 L2.00 17.70" fill="none" stroke="url(#gx)" stroke-width="3.90" stroke-linecap="round"/></svg>
<span class="t" style="left:1995.20px;top:522.37px;font-size:15.44px;line-height:25.6px;color:#cdcdcd;letter-spacing:0.123px;">Tracking scripts load too early</span>
<svg class="b" style="left:2410.90px;top:526.22px" width="18.6" height="17.4" viewBox="0 0 18.6 17.4"><ellipse cx="9.30" cy="8.70" rx="7.80" ry="7.20" fill="none" stroke="#a2a2a2" stroke-width="1"/><rect x="8.75" y="6.10" width="1.1" height="7.20" fill="#b4b4b4"/><rect x="8.30" y="3.40" width="2" height="1.9" fill="#b4b4b4"/></svg>
</li>
<li>
<div class="b" style="left:1952.20px;top:559.56px;width:484.00px;height:40.00px;background:#161616;border-radius:4px;"></div>
<svg class="b" style="left:1963.25px;top:571.11px" width="20.3" height="19.7" viewBox="0 0 20.3 19.7"><path d="M2.00 2.00 L18.30 17.70 M18.30 2.00 L2.00 17.70" fill="none" stroke="url(#gx)" stroke-width="3.90" stroke-linecap="round"/></svg>
<span class="t" style="left:1995.20px;top:567.51px;font-size:15.44px;line-height:25.6px;color:#cdcdcd;letter-spacing:0.113px;">No resource hints</span>
<svg class="b" style="left:2410.90px;top:571.36px" width="18.6" height="17.4" viewBox="0 0 18.6 17.4"><ellipse cx="9.30" cy="8.70" rx="7.80" ry="7.20" fill="none" stroke="#a2a2a2" stroke-width="1"/><rect x="8.75" y="6.10" width="1.1" height="7.20" fill="#b4b4b4"/><rect x="8.30" y="3.40" width="2" height="1.9" fill="#b4b4b4"/></svg>
</li>
</ul>
</section>
</div>
<div class="issue-grid">
<section class="issue-card">
<div class="b" style="left:289.00px;top:792.00px;width:530.00px;height:500.00px;background:#1a1a1a;border-radius:8px 8px 0 0;"></div>
<div class="b" style="left:305.00px;top:808.00px;width:71.00px;height:31.00px;background:#d95b43;border-radius:4px;"></div>
<span class="t" style="left:317.00px;top:812.64px;font-size:14.26px;line-height:23.04px;color:#fff;font-weight:700;letter-spacing:-0.139px;">Critical</span>
<h4 class="t" style="left:305.60px;top:855.71px;font-size:15.84px;line-height:25.6px;color:#fff;font-weight:700;letter-spacing:-0.309px;">Performance Issues</h4>
<p class="t" style="left:305.40px;top:888.86px;font-size:13.9px;line-height:23.04px;color:#fff;letter-spacing:0.110px;">Severe technical issues that directly affect speed and usability:</p>
<ul class="issues">
<li>
<svg class="b" style="left:307.90px;top:923.95px" width="14.6" height="14.1" viewBox="0 0 14.6 14.1"><path d="M1.48 1.48 L13.12 12.62 M13.12 1.48 L1.48 12.62" fill="none" stroke="url(#gx)" stroke-width="2.85" stroke-linecap="round"/></svg>
<span class="t" style="left:329.20px;top:919.76px;font-size:13.9px;line-height:23.04px;color:#fff;letter-spacing:-0.072px;">Mobile LCP: 8.9s (Too slow)</span>
<svg class="b" style="left:787.65px;top:922.90px" width="16.3" height="16.2" viewBox="0 0 16.3 16.2"><ellipse cx="8.15" cy="8.10" rx="6.65" ry="6.60" fill="none" stroke="#cfcfcf" stroke-width="1"/><rect x="7.60" y="5.70" width="1.1" height="6.64" fill="#e2e2e2"/><rect x="7.15" y="3.21" width="2" height="1.9" fill="#e2e2e2"/></svg>
</li>
<li>
<svg class="b" style="left:307.90px;top:947.12px" width="14.6" height="14.1" viewBox="0 0 14.6 14.1"><path d="M1.48 1.48 L13.12 12.62 M13.12 1.48 L1.48 12.62" fill="none" stroke="url(#gx)" stroke-width="2.85" stroke-linecap="round"/></svg>
<span class="t" style="left:329.20px;top:942.93px;font-size:13.9px;line-height:23.04px;color:#fff;letter-spacing:-0.050px;">CLS: 0.49 (Layout instability)</span>
<svg class="b" style="left:787.65px;top:946.07px" width="16.3" height="16.2" viewBox="0 0 16.3 16.2"><ellipse cx="8.15" cy="8.10" rx="6.65" ry="6.60" fill="none" stroke="#cfcfcf" stroke-width="1"/><rect x="7.60" y="5.70" width="1.1" height="6.64" fill="#e2e2e2"/><rect x="7.15" y="3.21" width="2" height="1.9" fill="#e2e2e2"/></svg>
</li>
<li>
<svg class="b" style="left:307.90px;top:970.29px" width="14.6" height="14.1" viewBox="0 0 14.6 14.1"><path d="M1.48 1.48 L13.12 12.62 M13.12 1.48 L1.48 12.62" fill="none" stroke="url(#gx)" stroke-width="2.85" stroke-linecap="round"/></svg>
<span class="t" style="left:329.20px;top:966.10px;font-size:13.9px;line-height:23.04px;color:#fff;letter-spacing:0.075px;">Blocking Time: 3,310ms (User can't interact)</span>
<svg class="b" style="left:787.65px;top:969.24px" width="16.3" height="16.2" viewBox="0 0 16.3 16.2"><ellipse cx="8.15" cy="8.10" rx="6.65" ry="6.60" fill="none" stroke="#cfcfcf" stroke-width="1"/><rect x="7.60" y="5.70" width="1.1" height="6.64" fill="#e2e2e2"/><rect x="7.15" y="3.21" width="2" height="1.9" fill="#e2e2e2"/></svg>
</li>
<li>
<svg class="b" style="left:307.90px;top:993.46px" width="14.6" height="14.1" viewBox="0 0 14.6 14.1"><path d="M1.48 1.48 L13.12 12.62 M13.12 1.48 L1.48 12.62" fill="none" stroke="url(#gx)" stroke-width="2.85" stroke-linecap="round"/></svg>
<span class="t" style="left:329.20px;top:989.27px;font-size:13.9px;line-height:23.04px;color:#fff;letter-spacing:-0.214px;">JS Size: 1.66MB (Heavy load)</span>
<svg class="b" style="left:787.65px;top:992.41px" width="16.3" height="16.2" viewBox="0 0 16.3 16.2"><ellipse cx="8.15" cy="8.10" rx="6.65" ry="6.60" fill="none" stroke="#cfcfcf" stroke-width="1"/><rect x="7.60" y="5.70" width="1.1" height="6.64" fill="#e2e2e2"/><rect x="7.15" y="3.21" width="2" height="1.9" fill="#e2e2e2"/></svg>
</li>
<li>
<svg class="b" style="left:307.90px;top:1016.63px" width="14.6" height="14.1" viewBox="0 0 14.6 14.1"><path d="M1.48 1.48 L13.12 12.62 M13.12 1.48 L1.48 12.62" fill="none" stroke="url(#gx)" stroke-width="2.85" stroke-linecap="round"/></svg>
<span class="t" style="left:329.20px;top:1012.44px;font-size:13.9px;line-height:23.04px;color:#fff;letter-spacing:-0.149px;">File Requests: 290+</span>
<svg class="b" style="left:787.65px;top:1015.58px" width="16.3" height="16.2" viewBox="0 0 16.3 16.2"><ellipse cx="8.15" cy="8.10" rx="6.65" ry="6.60" fill="none" stroke="#cfcfcf" stroke-width="1"/><rect x="7.60" y="5.70" width="1.1" height="6.64" fill="#e2e2e2"/><rect x="7.15" y="3.21" width="2" height="1.9" fill="#e2e2e2"/></svg>
</li>
<li>
<svg class="b" style="left:307.90px;top:1039.80px" width="14.6" height="14.1" viewBox="0 0 14.6 14.1"><path d="M1.48 1.48 L13.12 12.62 M13.12 1.48 L1.48 12.62" fill="none" stroke="url(#gx)" stroke-width="2.85" stroke-linecap="round"/></svg>
<span class="t" style="left:329.20px;top:1035.61px;font-size:13.9px;line-height:23.04px;color:#fff;letter-spacing:-0.008px;">DOM Elements: 1,500+</span>
<svg class="b" style="left:787.65px;top:1038.75px" width="16.3" height="16.2" viewBox="0 0 16.3 16.2"><ellipse cx="8.15" cy="8.10" rx="6.65" ry="6.60" fill="none" stroke="#cfcfcf" stroke-width="1"/><rect x="7.60" y="5.70" width="1.1" height="6.64" fill="#e2e2e2"/><rect x="7.15" y="3.21" width="2" height="1.9" fill="#e2e2e2"/></svg>
</li>
<li>
<svg class="b" style="left:307.90px;top:1062.97px" width="14.6" height="14.1" viewBox="0 0 14.6 14.1"><path d="M1.48 1.48 L13.12 12.62 M13.12 1.48 L1.48 12.62" fill="none" stroke="url(#gx)" stroke-width="2.85" stroke-linecap="round"/></svg>
<span class="t" style="left:329.20px;top:1058.78px;font-size:13.9px;line-height:23.04px;color:#fff;letter-spacing:0.019px;">CDN Usage: 220+ assets not using CDN</span>
<svg class="b" style="left:787.65px;top:1061.92px" width="16.3" height="16.2" viewBox="0 0 16.3 16.2"><ellipse cx="8.15" cy="8.10" rx="6.65" ry="6.60" fill="none" stroke="#cfcfcf" stroke-width="1"/><rect x="7.60" y="5.70" width="1.1" height="6.64" fill="#e2e2e2"/><rect x="7.15" y="3.21" width="2" height="1.9" fill="#e2e2e2"/></svg>
</li>
</ul>
<div class="b" style="left:305.00px;top:1097.00px;width:497.60px;height:1.00px;background:#393939;border-radius:0px;"></div>
<div class="recommendation">
<h5 class="t" style="left:305.40px;top:1114.74px;font-size:14.26px;line-height:23.04px;color:#5190e2;font-weight:700;letter-spacing:-0.097px;">Recommendation</h5>
<p class="t" style="left:305.40px;top:1146.76px;font-size:13.9px;line-height:23.04px;color:#fff;letter-spacing:0.037px;">Enable CDN for faster delivery (e.g. Cloudflare, BunnyCDN):</p>
<ul class="steps">
<li>
<span class="t" style="left:305.60px;top:1176.25px;font-size:12.6px;line-height:20.16px;color:#5190e2;font-family:'DejaVu Sans', sans-serif;">→</span>
<span class="t" style="left:329.20px;top:1175.96px;font-size:13.9px;line-height:23.04px;color:#fff;letter-spacing:-0.201px;">Compress and convert banners to WebP format</span>
</li>
<li>
<span class="t" style="left:305.60px;top:1206.25px;font-size:12.6px;line-height:20.16px;color:#5190e2;font-family:'DejaVu Sans', sans-serif;">→</span>
<span class="t" style="left:329.20px;top:1205.96px;font-size:13.9px;line-height:23.04px;color:#fff;letter-spacing:-0.060px;">Defer tracking and third-party scripts</span>
</li>
<li>
<span class="t" style="left:305.60px;top:1236.25px;font-size:12.6px;line-height:20.16px;color:#5190e2;font-family:'DejaVu Sans', sans-serif;">→</span>
<span class="t" style="left:329.20px;top:1235.96px;font-size:13.9px;line-height:23.04px;color:#fff;letter-spacing:-0.093px;">Implement lazy loading for images</span>
</li>
<li>
<span class="t" style="left:305.60px;top:1266.25px;font-size:12.6px;line-height:20.16px;color:#5190e2;font-family:'DejaVu Sans', sans-serif;">→</span>
<span class="t" style="left:329.20px;top:1265.96px;font-size:13.9px;line-height:23.04px;color:#fff;letter-spacing:-0.283px;">Reduce unused or render-blocking JS</span>
</li>
</ul>
</div>
</section>
<section class="issue-card">
<div class="b" style="left:834.90px;top:792.00px;width:530.10px;height:500.00px;background:#1a1a1a;border-radius:8px 8px 0 0;"></div>
<div class="b" style="left:850.90px;top:808.00px;width:56.20px;height:31.00px;background:#eaa133;border-radius:4px;"></div>
<span class="t" style="left:862.90px;top:812.64px;font-size:14.26px;line-height:23.04px;color:#fff;font-weight:700;letter-spacing:0.132px;">High</span>
<h4 class="t" style="left:851.50px;top:855.71px;font-size:15.84px;line-height:25.6px;color:#fff;font-weight:700;letter-spacing:0.001px;">UX &amp; Visual Hierarchy</h4>
<p class="t" style="left:851.30px;top:888.86px;font-size:13.9px;line-height:23.04px;color:#fff;letter-spacing:0.219px;">Missing clarity and visual guidance for first-time visitors:</p>
<ul class="issues">
<li>
<svg class="b" style="left:853.80px;top:923.95px" width="14.6" height="14.1" viewBox="0 0 14.6 14.1"><path d="M1.48 1.48 L13.12 12.62 M13.12 1.48 L1.48 12.62" fill="none" stroke="url(#gx)" stroke-width="2.85" stroke-linecap="round"/></svg>
<span class="t" style="left:875.10px;top:919.76px;font-size:13.9px;line-height:23.04px;color:#fff;letter-spacing:0.246px;">No clear CTA above the fold - Visitors don't know where to click</span>
<svg class="b" style="left:1333.55px;top:922.90px" width="16.3" height="16.2" viewBox="0 0 16.3 16.2"><ellipse cx="8.15" cy="8.10" rx="6.65" ry="6.60" fill="none" stroke="#cfcfcf" stroke-width="1"/><rect x="7.60" y="5.70" width="1.1" height="6.64" fill="#e2e2e2"/><rect x="7.15" y="3.21" width="2" height="1.9" fill="#e2e2e2"/></svg>
</li>
<li>
<svg class="b" style="left:853.80px;top:947.12px" width="14.6" height="14.1" viewBox="0 0 14.6 14.1"><path d="M1.48 1.48 L13.12 12.62 M13.12 1.48 L1.48 12.62" fill="none" stroke="url(#gx)" stroke-width="2.85" stroke-linecap="round"/></svg>
<span class="t" style="left:875.10px;top:942.93px;font-size:13.9px;line-height:23.04px;color:#fff;letter-spacing:0.240px;">Poor mobile navigation - Slow, delayed interactivity</span>
<svg class="b" style="left:1333.55px;top:946.07px" width="16.3" height="16.2" viewBox="0 0 16.3 16.2"><ellipse cx="8.15" cy="8.10" rx="6.65" ry="6.60" fill="none" stroke="#cfcfcf" stroke-width="1"/><rect x="7.60" y="5.70" width="1.1" height="6.64" fill="#e2e2e2"/><rect x="7.15" y="3.21" width="2" height="1.9" fill="#e2e2e2"/></svg>
</li>
<li>
<svg class="b" style="left:853.80px;top:970.29px" width="14.6" height="14.1" viewBox="0 0 14.6 14.1"><path d="M1.48 1.48 L13.12 12.62 M13.12 1.48 L1.48 12.62" fill="none" stroke="url(#gx)" stroke-width="2.85" stroke-linecap="round"/></svg>
<span class="t" style="left:875.10px;top:966.10px;font-size:13.9px;line-height:23.04px;color:#fff;letter-spacing:0.228px;">Banner lacks message/action - Missed opportunity to convert</span>
<svg class="b" style="left:1333.55px;top:969.24px" width="16.3" height="16.2" viewBox="0 0 16.3 16.2"><ellipse cx="8.15" cy="8.10" rx="6.65" ry="6.60" fill="none" stroke="#cfcfcf" stroke-width="1"/><rect x="7.60" y="5.70" width="1.1" height="6.64" fill="#e2e2e2"/><rect x="7.15" y="3.21" width="2" height="1.9" fill="#e2e2e2"/></svg>
</li>
<li>
<svg class="b" style="left:853.80px;top:993.46px" width="14.6" height="14.1" viewBox="0 0 14.6 14.1"><path d="M1.48 1.48 L13.12 12.62 M13.12 1.48 L1.48 12.62" fill="none" stroke="url(#gx)" stroke-width="2.85" stroke-linecap="round"/></svg>
<span class="t" style="left:875.10px;top:989.27px;font-size:13.9px;line-height:23.04px;color:#fff;letter-spacing:0.173px;">Weak category structure - Users don't discover what you sell</span>
<svg class="b" style="left:1333.55px;top:992.41px" width="16.3" height="16.2" viewBox="0 0 16.3 16.2"><ellipse cx="8.15" cy="8.10" rx="6.65" ry="6.60" fill="none" stroke="#cfcfcf" stroke-width="1"/><rect x="7.60" y="5.70" width="1.1" height="6.64" fill="#e2e2e2"/><rect x="7.15" y="3.21" width="2" height="1.9" fill="#e2e2e2"/></svg>
</li>
<li>
<svg class="b" style="left:853.80px;top:1016.63px" width="14.6" height="14.1" viewBox="0 0 14.6 14.1"><path d="M1.48 1.48 L13.12 12.62 M13.12 1.48 L1.48 12.62" fill="none" stroke="url(#gx)" stroke-width="2.85" stroke-linecap="round"/></svg>
<span class="t" style="left:875.10px;top:1012.44px;font-size:13.9px;line-height:23.04px;color:#fff;letter-spacing:0.237px;">Small tap targets - Hard to use on mobile</span>
<svg class="b" style="left:1333.55px;top:1015.58px" width="16.3" height="16.2" viewBox="0 0 16.3 16.2"><ellipse cx="8.15" cy="8.10" rx="6.65" ry="6.60" fill="none" stroke="#cfcfcf" stroke-width="1"/><rect x="7.60" y="5.70" width="1.1" height="6.64" fill="#e2e2e2"/><rect x="7.15" y="3.21" width="2" height="1.9" fill="#e2e2e2"/></svg>
</li>
</ul>
<div class="b" style="left:850.90px;top:1051.00px;width:497.60px;height:1.00px;background:#393939;border-radius:0px;"></div>
<div class="recommendation">
<h5 class="t" style="left:851.30px;top:1068.74px;font-size:14.26px;line-height:23.04px;color:#5190e2;font-weight:700;letter-spacing:-0.104px;">Recommendation</h5>
<p class="t" style="left:851.30px;top:1100.76px;font-size:13.9px;line-height:23.04px;color:#fff;letter-spacing:0.113px;">Add a CTA to banner: "Shop Now" or "See Radios":</p>
<ul class="steps">
<li>
<span class="t" style="left:851.50px;top:1130.25px;font-size:12.6px;line-height:20.16px;color:#5190e2;font-family:'DejaVu Sans', sans-serif;">→</span>
<span class="t" style="left:875.10px;top:1129.96px;font-size:13.9px;line-height:23.04px;color:#fff;letter-spacing:-0.139px;">Add visual category tiles under the banner</span>
</li>
<li>
<span class="t" style="left:851.50px;top:1159.25px;font-size:12.6px;line-height:20.16px;color:#5190e2;font-family:'DejaVu Sans', sans-serif;">→</span>
<span class="t" style="left:875.10px;top:1158.96px;font-size:13.9px;line-height:23.04px;color:#fff;letter-spacing:-0.127px;">Make sure navigation appears fast &amp; doesn't shift</span>
</li>
<li>
<span class="t" style="left:851.50px;top:1189.25px;font-size:12.6px;line-height:20.16px;color:#5190e2;font-family:'DejaVu Sans', sans-serif;">→</span>
<span class="t" style="left:875.10px;top:1188.96px;font-size:13.9px;line-height:23.04px;color:#fff;letter-spacing:-0.160px;">Increase tap area padding on mobile</span>
</li>
<li>
<span class="t" style="left:851.50px;top:1219.25px;font-size:12.6px;line-height:20.16px;color:#5190e2;font-family:'DejaVu Sans', sans-serif;">→</span>
<span class="t" style="left:875.10px;top:1218.96px;font-size:13.9px;line-height:23.04px;color:#fff;letter-spacing:-0.112px;">Label product groups with clear benefits</span>
</li>
</ul>
</div>
<div class="impact">
<div class="b" style="left:850.90px;top:1257.00px;width:497.75px;height:35.00px;background:#1f262e;border-radius:6px 6px 0 0;"></div>
<svg class="b" style="left:871.10px;top:1278.00px" width="10" height="14.2" viewBox="0 0 10 14.2"><path d="M5 0.1 C2.2 0.1 0.15 2.2 0.15 4.8 C0.15 6.4 0.9 7.5 1.7 8.4 C2.4 9.2 2.8 9.8 2.8 10.6 L7.2 10.6 C7.2 9.8 7.6 9.2 8.3 8.4 C9.1 7.5 9.85 6.4 9.85 4.8 C9.85 2.2 7.8 0.1 5 0.1 Z" fill="url(#gb)"/><ellipse cx="6.2" cy="2.2" rx="1.3" ry="1.0" fill="#fff" opacity="0.9"/><rect x="2.8" y="10.5" width="4.4" height="3.5" rx="0.5" fill="#a99ccb"/><rect x="2.8" y="11.4" width="4.4" height="1.0" fill="#d9d0ee"/></svg>
<span class="t" style="left:890.50px;top:1273.86px;font-size:13.9px;line-height:23.04px;color:#fff;letter-spacing:0.130px;">Business Impact: Even a beautiful homepage fails if users don't know</span>
</div>
</section>
<section class="issue-card">
<div class="b" style="left:1381.00px;top:792.00px;width:529.00px;height:500.00px;background:#1a1a1a;border-radius:8px 8px 0 0;"></div>
<div class="b" style="left:1397.00px;top:808.00px;width:56.20px;height:31.00px;background:#eaa133;border-radius:4px;"></div>
<span class="t" style="left:1409.00px;top:812.64px;font-size:14.26px;line-height:23.04px;color:#fff;font-weight:700;letter-spacing:0.132px;">High</span>
<h4 class="t" style="left:1397.60px;top:855.71px;font-size:15.84px;line-height:25.6px;color:#fff;font-weight:700;letter-spacing:-0.013px;">Technical Implementation</h4>
<p class="t" style="left:1397.40px;top:888.86px;font-size:13.9px;line-height:23.04px;color:#fff;letter-spacing:0.167px;">Things behind the scenes that hurt how the site loads and feels:</p>
<ul class="issues">
<li>
<svg class="b" style="left:1399.90px;top:923.95px" width="14.6" height="14.1" viewBox="0 0 14.6 14.1"><path d="M1.48 1.48 L13.12 12.62 M13.12 1.48 L1.48 12.62" fill="none" stroke="url(#gx)" stroke-width="2.85" stroke-linecap="round"/></svg>
<span class="t" style="left:1421.20px;top:919.76px;font-size:13.9px;line-height:23.04px;color:#fff;letter-spacing:0.064px;">JS executes before content - Blocks render</span>
<svg class="b" style="left:1879.65px;top:922.90px" width="16.3" height="16.2" viewBox="0 0 16.3 16.2"><ellipse cx="8.15" cy="8.10" rx="6.65" ry="6.60" fill="none" stroke="#cfcfcf" stroke-width="1"/><rect x="7.60" y="5.70" width="1.1" height="6.64" fill="#e2e2e2"/><rect x="7.15" y="3.21" width="2" height="1.9" fill="#e2e2e2"/></svg>
</li>
<li>
<svg class="b" style="left:1399.90px;top:947.12px" width="14.6" height="14.1" viewBox="0 0 14.6 14.1"><path d="M1.48 1.48 L13.12 12.62 M13.12 1.48 L1.48 12.62" fill="none" stroke="url(#gx)" stroke-width="2.85" stroke-linecap="round"/></svg>
<span class="t" style="left:1421.20px;top:942.93px;font-size:13.9px;line-height:23.04px;color:#fff;letter-spacing:0.313px;">Layout shift on mobile - Images/fonts load too late</span>
<svg class="b" style="left:1879.65px;top:946.07px" width="16.3" height="16.2" viewBox="0 0 16.3 16.2"><ellipse cx="8.15" cy="8.10" rx="6.65" ry="6.60" fill="none" stroke="#cfcfcf" stroke-width="1"/><rect x="7.60" y="5.70" width="1.1" height="6.64" fill="#e2e2e2"/><rect x="7.15" y="3.21" width="2" height="1.9" fill="#e2e2e2"/></svg>
</li>
<li>
<svg class="b" style="left:1399.90px;top:970.29px" width="14.6" height="14.1" viewBox="0 0 14.6 14.1"><path d="M1.48 1.48 L13.12 12.62 M13.12 1.48 L1.48 12.62" fill="none" stroke="url(#gx)" stroke-width="2.85" stroke-linecap="round"/></svg>
<span class="t" style="left:1421.20px;top:966.10px;font-size:13.9px;line-height:23.04px;color:#fff;letter-spacing:0.250px;">Fonts load inefficiently - Adds extra weight</span>
<svg class="b" style="left:1879.65px;top:969.24px" width="16.3" height="16.2" viewBox="0 0 16.3 16.2"><ellipse cx="8.15" cy="8.10" rx="6.65" ry="6.60" fill="none" stroke="#cfcfcf" stroke-width="1"/><rect x="7.60" y="5.70" width="1.1" height="6.64" fill="#e2e2e2"/><rect x="7.15" y="3.21" width="2" height="1.9" fill="#e2e2e2"/></svg>
</li>
<li>
<svg class="b" style="left:1399.90px;top:993.46px" width="14.6" height="14.1" viewBox="0 0 14.6 14.1"><path d="M1.48 1.48 L13.12 12.62 M13.12 1.48 L1.48 12.62" fill="none" stroke="url(#gx)" stroke-width="2.85" stroke-linecap="round"/></svg>
<span class="t" style="left:1421.20px;top:989.27px;font-size:13.9px;line-height:23.04px;color:#fff;letter-spacing:0.106px;">Tracking scripts load too early - Hotjar, Meta Pixel, Zendesk, etc.</span>
<svg class="b" style="left:1879.65px;top:992.41px" width="16.3" height="16.2" viewBox="0 0 16.3 16.2"><ellipse cx="8.15" cy="8.10" rx="6.65" ry="6.60" fill="none" stroke="#cfcfcf" stroke-width="1"/><rect x="7.60" y="5.70" width="1.1" height="6.64" fill="#e2e2e2"/><rect x="7.15" y="3.21" width="2" height="1.9" fill="#e2e2e2"/></svg>
</li>
<li>
<svg class="b" style="left:1399.90px;top:1016.63px" width="14.6" height="14.1" viewBox="0 0 14.6 14.1"><path d="M1.48 1.48 L13.12 12.62 M13.12 1.48 L1.48 12.62" fill="none" stroke="url(#gx)" stroke-width="2.85" stroke-linecap="round"/></svg>
<span class="t" style="left:1421.20px;top:1012.44px;font-size:13.9px;line-height:23.04px;color:#fff;letter-spacing:0.162px;">No resource hints - Browser can't preload key files</span>
<svg class="b" style="left:1879.65px;top:1015.58px" width="16.3" height="16.2" viewBox="0 0 16.3 16.2"><ellipse cx="8.15" cy="8.10" rx="6.65" ry="6.60" fill="none" stroke="#cfcfcf" stroke-width="1"/><rect x="7.60" y="5.70" width="1.1" height="6.64" fill="#e2e2e2"/><rect x="7.15" y="3.21" width="2" height="1.9" fill="#e2e2e2"/></svg>
</li>
</ul>
<div class="b" style="left:1397.00px;top:1051.00px;width:497.60px;height:1.00px;background:#393939;border-radius:0px;"></div>
<div class="recommendation">
<h5 class="t" style="left:1397.40px;top:1068.74px;font-size:14.26px;line-height:23.04px;color:#5190e2;font-weight:700;letter-spacing:-0.119px;">Recommendation</h5>
<p class="t" style="left:1397.40px;top:1100.76px;font-size:13.9px;line-height:23.04px;color:#fff;letter-spacing:0.246px;">Add rel=preload for banners, fonts:</p>
<ul class="steps">
<li>
<span class="t" style="left:1397.60px;top:1130.25px;font-size:12.6px;line-height:20.16px;color:#5190e2;font-family:'DejaVu Sans', sans-serif;">→</span>
<span class="t" style="left:1421.20px;top:1129.96px;font-size:13.9px;line-height:23.04px;color:#fff;letter-spacing:-0.202px;">Prioritize critical CSS over third-party styles</span>
</li>
<li>
<span class="t" style="left:1397.60px;top:1159.25px;font-size:12.6px;line-height:20.16px;color:#5190e2;font-family:'DejaVu Sans', sans-serif;">→</span>
<span class="t" style="left:1421.20px;top:1158.96px;font-size:13.9px;line-height:23.04px;color:#fff;letter-spacing:-0.176px;">Move tracking/analytics to load after FCP</span>
</li>
<li>
<span class="t" style="left:1397.60px;top:1189.25px;font-size:12.6px;line-height:20.16px;color:#5190e2;font-family:'DejaVu Sans', sans-serif;">→</span>
<span class="t" style="left:1421.20px;top:1188.96px;font-size:13.9px;line-height:23.04px;color:#fff;letter-spacing:-0.196px;">Lazy-load non-essential components</span>
</li>
<li>
<span class="t" style="left:1397.60px;top:1219.25px;font-size:12.6px;line-height:20.16px;color:#5190e2;font-family:'DejaVu Sans', sans-serif;">→</span>
<span class="t" style="left:1421.20px;top:1218.96px;font-size:13.9px;line-height:23.04px;color:#fff;letter-spacing:0.041px;">Add height/width to images to prevent shifting</span>
</li>
</ul>
</div>
<div class="impact">
<div class="b" style="left:1397.00px;top:1257.00px;width:497.75px;height:35.00px;background:#1f262e;border-radius:6px 6px 0 0;"></div>
<svg class="b" style="left:1417.20px;top:1278.00px" width="10" height="14.2" viewBox="0 0 10 14.2"><path d="M5 0.1 C2.2 0.1 0.15 2.2 0.15 4.8 C0.15 6.4 0.9 7.5 1.7 8.4 C2.4 9.2 2.8 9.8 2.8 10.6 L7.2 10.6 C7.2 9.8 7.6 9.2 8.3 8.4 C9.1 7.5 9.85 6.4 9.85 4.8 C9.85 2.2 7.8 0.1 5 0.1 Z" fill="url(#gb)"/><ellipse cx="6.2" cy="2.2" rx="1.3" ry="1.0" fill="#fff" opacity="0.9"/><rect x="2.8" y="10.5" width="4.4" height="3.5" rx="0.5" fill="#a99ccb"/><rect x="2.8" y="11.4" width="4.4" height="1.0" fill="#d9d0ee"/></svg>
<span class="t" style="left:1436.60px;top:1273.86px;font-size:13.9px;line-height:23.04px;color:#fff;letter-spacing:0.071px;">Business Impact: These are low-visibility technical issues that make</span>
</div>
</section>
<section class="issue-card">
<div class="b" style="left:1926.20px;top:792.00px;width:529.80px;height:500.00px;background:#1a1a1a;border-radius:8px 8px 0 0;"></div>
<div class="b" style="left:1942.20px;top:808.00px;width:81.20px;height:31.00px;background:#5b92e0;border-radius:4px;"></div>
<span class="t" style="left:1954.50px;top:812.64px;font-size:14.26px;line-height:23.04px;color:#fff;font-weight:700;letter-spacing:0.293px;">Medium</span>
<h4 class="t" style="left:1942.80px;top:855.71px;font-size:15.84px;line-height:25.6px;color:#fff;font-weight:700;letter-spacing:0.060px;">Content &amp; Engagement</h4>
<p class="t" style="left:1942.60px;top:888.86px;font-size:13.9px;line-height:23.04px;color:#fff;letter-spacing:0.147px;">Content structure and persuasion elements are missing or weak:</p>
<ul class="issues">
<li>
<svg class="b" style="left:1945.10px;top:923.95px" width="14.6" height="14.1" viewBox="0 0 14.6 14.1"><path d="M1.48 1.48 L13.12 12.62 M13.12 1.48 L1.48 12.62" fill="none" stroke="url(#gx)" stroke-width="2.85" stroke-linecap="round"/></svg>
<span class="t" style="left:1966.40px;top:919.76px;font-size:13.9px;line-height:23.04px;color:#fff;letter-spacing:0.086px;">Banner lacks info or CTA - Large image, but no message</span>
<svg class="b" style="left:2424.85px;top:922.90px" width="16.3" height="16.2" viewBox="0 0 16.3 16.2"><ellipse cx="8.15" cy="8.10" rx="6.65" ry="6.60" fill="none" stroke="#cfcfcf" stroke-width="1"/><rect x="7.60" y="5.70" width="1.1" height="6.64" fill="#e2e2e2"/><rect x="7.15" y="3.21" width="2" height="1.9" fill="#e2e2e2"/></svg>
</li>
<li>
<svg class="b" style="left:1945.10px;top:947.12px" width="14.6" height="14.1" viewBox="0 0 14.6 14.1"><path d="M1.48 1.48 L13.12 12.62 M13.12 1.48 L1.48 12.62" fill="none" stroke="url(#gx)" stroke-width="2.85" stroke-linecap="round"/></svg>
<span class="t" style="left:1966.40px;top:942.93px;font-size:13.9px;line-height:23.04px;color:#fff;letter-spacing:0.231px;">No visible categories or tiles - Poor product discoverability</span>
<svg class="b" style="left:2424.85px;top:946.07px" width="16.3" height="16.2" viewBox="0 0 16.3 16.2"><ellipse cx="8.15" cy="8.10" rx="6.65" ry="6.60" fill="none" stroke="#cfcfcf" stroke-width="1"/><rect x="7.60" y="5.70" width="1.1" height="6.64" fill="#e2e2e2"/><rect x="7.15" y="3.21" width="2" height="1.9" fill="#e2e2e2"/></svg>
</li>
<li>
<svg class="b" style="left:1945.10px;top:970.29px" width="14.6" height="14.1" viewBox="0 0 14.6 14.1"><path d="M1.48 1.48 L13.12 12.62 M13.12 1.48 L1.48 12.62" fill="none" stroke="url(#gx)" stroke-width="2.85" stroke-linecap="round"/></svg>
<span class="t" style="left:1966.40px;top:966.10px;font-size:13.9px;line-height:23.04px;color:#fff;letter-spacing:0.102px;">No USPs or trust elements - Why buy here?</span>
<svg class="b" style="left:2424.85px;top:969.24px" width="16.3" height="16.2" viewBox="0 0 16.3 16.2"><ellipse cx="8.15" cy="8.10" rx="6.65" ry="6.60" fill="none" stroke="#cfcfcf" stroke-width="1"/><rect x="7.60" y="5.70" width="1.1" height="6.64" fill="#e2e2e2"/><rect x="7.15" y="3.21" width="2" height="1.9" fill="#e2e2e2"/></svg>
</li>
<li>
<svg class="b" style="left:1945.10px;top:993.46px" width="14.6" height="14.1" viewBox="0 0 14.6 14.1"><path d="M1.48 1.48 L13.12 12.62 M13.12 1.48 L1.48 12.62" fill="none" stroke="url(#gx)" stroke-width="2.85" stroke-linecap="round"/></svg>
<span class="t" style="left:1966.40px;top:989.27px;font-size:13.9px;line-height:23.04px;color:#fff;letter-spacing:0.245px;">No social proof or promotions - Feels generic</span>
<svg class="b" style="left:2424.85px;top:992.41px" width="16.3" height="16.2" viewBox="0 0 16.3 16.2"><ellipse cx="8.15" cy="8.10" rx="6.65" ry="6.60" fill="none" stroke="#cfcfcf" stroke-width="1"/><rect x="7.60" y="5.70" width="1.1" height="6.64" fill="#e2e2e2"/><rect x="7.15" y="3.21" width="2" height="1.9" fill="#e2e2e2"/></svg>
</li>
</ul>
<div class="b" style="left:1942.20px;top:1027.00px;width:497.60px;height:1.00px;background:#393939;border-radius:0px;"></div>
<div class="recommendation">
<h5 class="t" style="left:1942.60px;top:1044.74px;font-size:14.26px;line-height:23.04px;color:#5190e2;font-weight:700;letter-spacing:-0.097px;">Recommendation</h5>
<p class="t" style="left:1942.60px;top:1076.76px;font-size:13.9px;line-height:23.04px;color:#fff;letter-spacing:0.260px;">Add banner messaging and action button:</p>
<ul class="steps">
<li>
<span class="t" style="left:1942.80px;top:1107.25px;font-size:12.6px;line-height:20.16px;color:#5190e2;font-family:'DejaVu Sans', sans-serif;">→</span>
<span class="t" style="left:1966.40px;top:1106.96px;font-size:13.9px;line-height:23.04px;color:#fff;letter-spacing:-0.165px;">Display 3–4 product categories with icons or badges</span>
</li>
<li>
<span class="t" style="left:1942.80px;top:1136.25px;font-size:12.6px;line-height:20.16px;color:#5190e2;font-family:'DejaVu Sans', sans-serif;">→</span>
<span class="t" style="left:1966.40px;top:1135.96px;font-size:13.9px;line-height:23.04px;color:#fff;letter-spacing:-0.250px;">Highlight what makes Tehnoturg special (Est. 1992, pro service, etc.)</span>
</li>
<li>
<span class="t" style="left:1942.80px;top:1166.25px;font-size:12.6px;line-height:20.16px;color:#5190e2;font-family:'DejaVu Sans', sans-serif;">→</span>
<span class="t" style="left:1966.40px;top:1165.96px;font-size:13.9px;line-height:23.04px;color:#fff;letter-spacing:0.019px;">Add a promotional block or featured product row</span>
</li>
<li>
<span class="t" style="left:1942.80px;top:1196.25px;font-size:12.6px;line-height:20.16px;color:#5190e2;font-family:'DejaVu Sans', sans-serif;">→</span>
<span class="t" style="left:1966.40px;top:1195.96px;font-size:13.9px;line-height:23.04px;color:#fff;letter-spacing:-0.117px;">If available: add a review/testimonial snippet</span>
</li>
</ul>
</div>
<div class="impact">
<div class="b" style="left:1942.20px;top:1234.00px;width:497.75px;height:58.00px;background:#1f262e;border-radius:6px 6px 0 0;"></div>
<svg class="b" style="left:1962.90px;top:1255.00px" width="10" height="14.2" viewBox="0 0 10 14.2"><path d="M5 0.1 C2.2 0.1 0.15 2.2 0.15 4.8 C0.15 6.4 0.9 7.5 1.7 8.4 C2.4 9.2 2.8 9.8 2.8 10.6 L7.2 10.6 C7.2 9.8 7.6 9.2 8.3 8.4 C9.1 7.5 9.85 6.4 9.85 4.8 C9.85 2.2 7.8 0.1 5 0.1 Z" fill="url(#gb)"/><ellipse cx="6.2" cy="2.2" rx="1.3" ry="1.0" fill="#fff" opacity="0.9"/><rect x="2.8" y="10.5" width="4.4" height="3.5" rx="0.5" fill="#a99ccb"/><rect x="2.8" y="11.4" width="4.4" height="1.0" fill="#d9d0ee"/></svg>
<span class="t" style="left:1982.30px;top:1250.86px;font-size:13.9px;line-height:23.04px;color:#fff;letter-spacing:0.067px;">Business Impact: Visitors need to see what's for sale, why it's valuable,</span>
<span class="t" style="left:1958.20px;top:1273.86px;font-size:13.9px;line-height:23.04px;color:#fff;letter-spacing:0.217px;">and why they should trust you — all within 5 seconds.</span>
</div>
</section>
</div>
</main>
</div></body></html>
